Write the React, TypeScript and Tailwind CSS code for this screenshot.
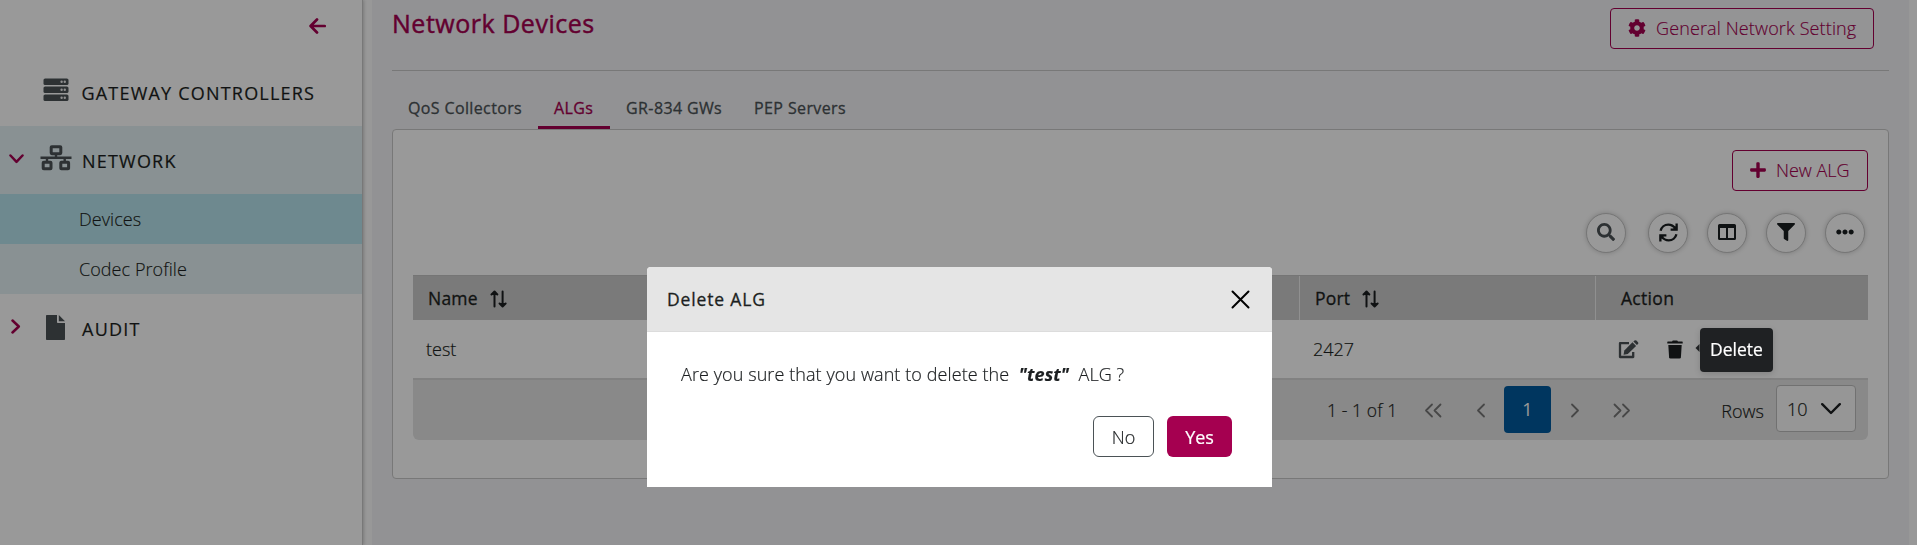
import React from "react";
import { FaCog, FaPlus, FaSearch, FaFilter, FaEllipsisH } from "react-icons/fa";

type P = { className?: string };

const ServerIcon = ({ className }: P) => (
  <svg className={className} viewBox="0 0 26 24" fill="currentColor">
    {[0.5, 8.5, 16.5].map((y) => (
      <g key={y}>
        <rect x="0.5" y={y} width="25" height="6.6" rx="1.6" />
        <circle cx="18.6" cy={y + 3.3} r="1.2" fill="#f0f0f0" />
        <circle cx="21.8" cy={y + 3.3} r="1.2" fill="#f0f0f0" />
      </g>
    ))}
  </svg>
);

const NetworkIcon = ({ className }: P) => (
  <svg className={className} viewBox="0 0 32 26" fill="none" stroke="currentColor">
    <rect x="11.2" y="1.7" width="9.6" height="7" rx="0.6" strokeWidth="3" />
    <rect x="3.2" y="17.2" width="7.8" height="6.6" rx="0.6" strokeWidth="3" />
    <rect x="20.8" y="17.2" width="7.8" height="6.6" rx="0.6" strokeWidth="3" />
    <path d="M0.5 12.7H31.5M16 9V12.5M7 12.5V17M24.7 12.5V17" strokeWidth="2.4" />
  </svg>
);

const FileIcon = ({ className }: P) => (
  <svg className={className} viewBox="0 0 19 25" fill="currentColor">
    <path d="M0.8 0H11V7.2Q11 8 11.8 8H19V24.2Q19 25 18.2 25H0.8Q0 25 0 24.2V0.8Q0 0 0.8 0Z" />
    <path d="M12.8 0L19 6.2H12.8Z" />
  </svg>
);

const Stroke = ({ className, d, box, w = 2 }: P & { d: string; box: string; w?: number }) => (
  <svg className={className} viewBox={box} fill="none" stroke="currentColor" strokeWidth={w} strokeLinecap="round" strokeLinejoin="round">
    <path d={d} />
  </svg>
);

const SortIcon = () => (
  <svg className="mt-0.5 h-[18px] w-[17px]" viewBox="0 0 17 18" fill="none" stroke="currentColor" strokeWidth="2" strokeLinecap="round" strokeLinejoin="round">
    <path d="M4.500 16.500V2M1.500 4.500L4.500 1.500L7.300 4.500M12.600 1.500V16M9.600 13.500L12.600 16.500L15.600 13.500" />
    <path d="M2.500 4.200L4.500 2L6.500 4.200ZM10.600 13.800L12.600 16L14.600 13.800Z" fill="currentColor" strokeWidth="1" />
  </svg>
);

const RefreshIcon = () => (
  <svg className="h-[19px] w-[19px]" viewBox="0 0 18 18" fill="none" stroke="currentColor" strokeWidth="2.200">
    <path d="M1.500 7.400C2.300 4 5.200 1.500 8.800 1.500C11.900 1.500 14 3 15.800 5.300M16.700 0.500V6.300H11" />
    <path d="M16.500 10.600C15.700 14 12.800 16.500 9.200 16.500C6.100 16.500 4 15 2.200 12.700M1.300 17.500V11.700H7" />
    <path d="M1.300 15.200V11.700H5.200Z" fill="currentColor" strokeWidth="0.500" />
    <path d="M16.700 2.800V6.300H12.800Z" fill="currentColor" strokeWidth="0.500" />
  </svg>
);

const ColumnsIcon = () => (
  <svg className="h-4 w-[18px]" viewBox="0 0 18 16" fill="none" stroke="currentColor" strokeWidth="2">
    <rect x="1" y="1" width="16" height="14" rx="0.6" />
    <path d="M1 2.500H17" strokeWidth="3" />
    <path d="M9 2V15" />
  </svg>
);

const EditIcon = () => (
  <svg className="h-[19px] w-[21px]" viewBox="0 0 21 19" fill="currentColor">
    <path d="M11 3.200H2V17H15.200V12" fill="none" stroke="currentColor" strokeWidth="2.300" strokeLinejoin="round" />
    <path d="M14.500 2.300L18.100 5.900L9.800 14L5.600 14.700L6.300 10.400Z" />
    <path d="M15.400 1.500L16.500 0.500Q17.500 -0.200 18.400 0.600L20 2.200Q20.700 3 20 3.900L18.900 5Z" />
  </svg>
);

const TrashIcon = () => (
  <svg className="h-[19px] w-4" viewBox="0 0 16 19" fill="currentColor">
    <path d="M0.800 1.500H5L5.800 0.400H10.200L11 1.500H15.200Q15.700 1.500 15.700 2V3.500H0.300V2Q0.300 1.500 0.800 1.500Z" />
    <path d="M1.300 5H14.700L13.900 17.200Q13.800 18.600 12.500 18.600H3.500Q2.200 18.600 2.100 17.200Z" />
  </svg>
);

const Round = ({ children, className = "" }: P & { children: React.ReactNode }) => (
  <button className={"flex h-10 w-10 items-center justify-center rounded-full border border-[#c4c4c4] bg-white pb-0.5 text-[#1a1e20] shadow-[0_0_5px_rgba(0,0,0,0.2)] " + className}>
    {children}
  </button>
);

function Sidebar() {
  return (
    <aside className="flex h-full w-[363px] shrink-0 flex-col border-r border-[#c8c8c8] bg-white text-lg text-[#1c1f21] shadow-[1px_0_3px_rgba(0,0,0,0.2)]">
      <div className="flex h-[58px] shrink-0 justify-end pt-[18px] pr-9">
        <Stroke className="h-4 w-[17px] text-[#a50050]" box="0 0 17 16" w={2.7} d="M15.700 8H2M8 1.500L1.600 8L8 14.500" />
      </div>
      <div className="flex h-[68px] shrink-0 items-center pl-[43px]">
        <ServerIcon className="mb-1 h-6 w-[26px] text-[#4b5256]" />
        <span className="ml-[12.500px] pt-0.5 font-medium tracking-[1.200px] [-webkit-text-stroke:0.2px]">GATEWAY CONTROLLERS</span>
      </div>
      <div className="bg-[#e4f2f5]">
        <div className="flex h-[68px] items-center pl-[9px]">
          <Stroke className="mb-0.5 h-[10px] w-[15px] text-[#a50050]" box="0 0 15 10" w={2.5} d="M1.500 1.500L7.500 7.800L13.500 1.500" />
          <NetworkIcon className="mb-1 ml-4 h-[26px] w-8 text-[#4b5256]" />
          <span className="ml-[10px] pt-0.5 font-medium tracking-[1.200px] [-webkit-text-stroke:0.2px]">NETWORK</span>
        </div>
        <div className="flex h-[50px] items-center bg-[#b8e5ee] pl-[79px] font-light tracking-[0.060px] [-webkit-text-stroke:0.15px]">Devices</div>
        <div className="flex h-[50px] items-center pl-[79px] font-light tracking-[0.060px] [-webkit-text-stroke:0.15px]">Codec Profile</div>
      </div>
      <div className="flex h-[68px] items-center pl-[11px]">
        <Stroke className="mb-1 h-[15px] w-[10px] text-[#a50050]" box="0 0 10 15" w={2.5} d="M1.500 1.500L7.800 7.500L1.500 13.500" />
        <FileIcon className="mb-0.5 ml-[25px] h-[25px] w-[19px] text-[#4b5256]" />
        <span className="ml-[17px] pt-0.5 font-medium tracking-[1.250px] [-webkit-text-stroke:0.2px]">AUDIT</span>
      </div>
    </aside>
  );
}

const tabs = ["QoS Collectors", "ALGs", "GR-834 GWs", "PEP Servers"];

function DeviceTable() {
  return (
    <div className="mt-[22px] text-lg text-[#1c1f21]">
      <div className="flex h-[45px] items-center border-t border-[#c4c4c4] bg-[#cbcbcb] font-medium [-webkit-text-stroke:0.3px]">
        <div className="flex h-full w-[887px] items-center gap-3 border-r border-[#f0f0f0] pl-[15px]">
          <span className="w-[50px] pt-px text-[17.500px] tracking-[0.200px]">Name</span>
          <SortIcon />
        </div>
        <div className="flex h-full w-[296px] items-center gap-3 border-r border-[#f0f0f0] pl-[15px]">
          <span className="w-[35px] pt-px text-[17.500px] tracking-[0.200px]">Port</span>
          <SortIcon />
        </div>
        <div className="pt-px pl-[25px] text-[17.500px] tracking-[0.300px]">Action</div>
      </div>
      <div className="flex h-[58px] items-center font-light [-webkit-text-stroke:0.2px]">
        <div className="w-[900px] pl-[13px]">test</div>
        <div className="w-[298px]">2427</div>
        <div className="relative flex items-center">
          <span className="ml-[7px] text-[#4b5256]"><EditIcon /></span>
          <span className="ml-7"><TrashIcon /></span>
          <div className="absolute top-[-12px] left-[84px] z-50 flex items-center">
            <svg className="mb-1 h-2 w-[5px]" viewBox="0 0 5 8"><path d="M4.500 0V8L0.500 4Z" fill="#1f2123" /></svg>
            <div className="flex h-11 w-[73px] items-center justify-center rounded-[4px] bg-[#1f2123] text-[17.500px] font-normal text-white shadow-[0_2px_6px_rgba(0,0,0,0.15)] [-webkit-text-stroke:0.2px]">Delete</div>
          </div>
        </div>
      </div>
      <div className="flex h-[62px] items-center rounded-b-md border-t-2 border-[#d8d8d8] bg-[#e5e5e5] font-light">
        <span className="ml-[914px] w-[70px] whitespace-nowrap pt-px text-[17.500px] tracking-[0.100px] [-webkit-text-stroke:0.2px]">1 - 1 of 1</span>
        <span className="ml-[27px] flex items-center text-[#777]">
          <Stroke className="h-[15px] w-[18px]" box="0 0 18 15" d="M8 1.500L2 7.500L8 13.500M16.500 1.500L10.500 7.500L16.500 13.500" w={1.8} />
          <Stroke className="ml-[34px] h-[15px] w-[10px]" box="0 0 10 15" d="M8 1.500L2 7.500L8 13.500" w={1.8} />
        </span>
        <span className="mb-0.5 ml-[18px] flex h-[47px] w-[47px] items-center justify-center rounded bg-[#005a9e] font-normal text-white">1</span>
        <span className="ml-[19px] flex items-center text-[#777]">
          <Stroke className="h-[15px] w-[10px]" box="0 0 10 15" d="M2 1.500L8 7.500L2 13.500" w={1.8} />
          <Stroke className="ml-[33px] h-[15px] w-[18px]" box="0 0 18 15" d="M1.500 1.500L7.500 7.500L1.500 13.500M10 1.500L16 7.500L10 13.500" w={1.8} />
        </span>
        <span className="mr-[12px] ml-auto pt-px [-webkit-text-stroke:0.2px]">Rows</span>
        <span className="mr-3 mb-[3px] flex h-[47px] w-20 items-center rounded border border-[#bdbdbd] bg-[#fafafa] pl-[10px] [-webkit-text-stroke:0.2px]">
          10
          <Stroke className="ml-[13px] h-3 w-5" box="0 0 20 12" d="M1.200 1.200L10 10L18.800 1.200" w={2.4} />
        </span>
      </div>
    </div>
  );
}

function DeleteDialog() {
  return (
    <div className="fixed inset-0 z-40 flex justify-center bg-black/40 pt-[267px] pl-[2px]">
      <div className="flex h-[220px] w-[625px] flex-col overflow-hidden rounded-t bg-white text-lg text-[#1c1f21]">
        <div className="flex h-[65px] items-center justify-between border-b border-[#dcdcdc] bg-[#e5e5e5] pr-[22px] pl-5">
          <h2 className="pt-0.5 text-[17.500px] font-medium tracking-[0.850px] [-webkit-text-stroke:0.3px]">Delete ALG</h2>
          <Stroke className="h-[19px] w-[19px] text-black" box="0 0 19 19" d="M1.500 1.500L17.500 17.500M17.500 1.500L1.500 17.500" w={2} />
        </div>
        <p className="mt-7 pl-[34px] font-light tracking-[0.085px] whitespace-pre [-webkit-text-stroke:0.2px]">
          Are you sure that you want to delete the{"  "}<b className="font-bold italic">"test"</b>{"  "}ALG ?
        </p>
        <div className="mt-auto mb-[30px] flex justify-end gap-[13px] pr-10">
          <button className="h-[41px] w-[61px] rounded-md border border-[#4b5256] font-light [-webkit-text-stroke:0.2px]">No</button>
          <button className="h-[41px] w-[65px] rounded-md bg-[#a50050] text-white [-webkit-text-stroke:0.2px]">Yes</button>
        </div>
      </div>
    </div>
  );
}

export default function App() {
  return (
    <div className="flex h-[545px] w-full overflow-hidden bg-[#fdfdfd] font-['Open_Sans','Noto_Sans',sans-serif]">
      <Sidebar />
      <main className="ml-[9px] h-full w-[1537px] bg-[#f4f4f7] pr-[20px] pl-5">
        <header className="flex h-[71px] justify-between border-b border-[#c8c8c8] pr-[15px]">
          <h1 className="pt-[5px] text-[25px] leading-9 font-medium tracking-[0.520px] text-[#a50050] [-webkit-text-stroke:0.45px]">Network Devices</h1>
          <button className="mt-2 flex h-[41px] w-[264px] items-center rounded border border-[#a50050] bg-white/30 pb-px pl-[17px] text-lg font-light tracking-[0.130px] whitespace-nowrap text-[#a50050] [-webkit-text-stroke:0.15px]">
            <FaCog className="mr-[10px] mb-px h-[18px] w-[18px]" />
            General Network Setting
          </button>
        </header>
        <nav className="flex h-[58px] items-end text-base font-medium tracking-[0.370px] text-[#4b5256] [-webkit-text-stroke:0.3px]">
          {tabs.map((t) => (
            <a key={t} className={t === "ALGs" ? "h-[41px] w-[72px] border-b-[3px] border-[#a50050] px-4 pt-2 text-[#a50050]" : "h-[41px] px-4 pt-2"}>
              {t}
            </a>
          ))}
        </nav>
        <section className="h-[350px] rounded border border-[#c8c8c8] bg-white px-5 pt-5">
          <div className="flex justify-end">
            <button className="flex h-[41px] w-[136px] items-center rounded border border-[#a50050] pb-px pl-4 text-lg font-light text-[#a50050] [-webkit-text-stroke:0.15px]">
              <FaPlus className="mr-[9px] h-[18px] w-[18px]" />
              New ALG
            </button>
          </div>
          <div className="mt-[22px] flex justify-end gap-[19px] pr-[3px]">
            <Round className="mr-[3px]"><FaSearch className="h-[18px] w-[18px] text-[#4b5256]" /></Round>
            <Round><RefreshIcon /></Round>
            <Round><ColumnsIcon /></Round>
            <Round><FaFilter className="h-[18px] w-[18px]" /></Round>
            <Round><FaEllipsisH className="h-[18px] w-[18px]" /></Round>
          </div>
          <DeviceTable />
        </section>
      </main>
      <DeleteDialog />
    </div>
  );
}
